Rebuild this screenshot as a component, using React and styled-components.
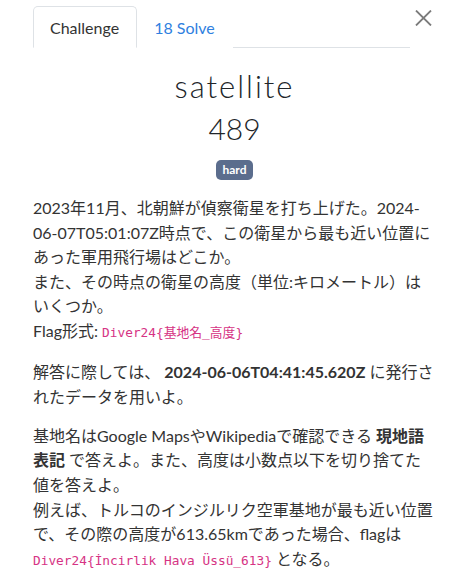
import styled, { createGlobalStyle } from "styled-components";

const GlobalStyle = createGlobalStyle`
  html, body {
    margin: 0;
    padding: 0;
    background: #fff;
  }
  body {
    font-family: Lato, "Noto Sans CJK JP", sans-serif;
    color: #212529;
  }
`;

const Modal = styled.div`
  width: 466px;
  box-sizing: border-box;
  padding: 6px 30px 0 33px;
`;

const Header = styled.div`
  display: flex;
  align-items: flex-start;
`;

const Tabs = styled.ul`
  display: flex;
  list-style: none;
  margin: 0;
  padding: 0;
  width: 377px;
  border-bottom: 1px solid #dee2e6;
`;

const Tab = styled.li`
  margin-bottom: -1px;
  padding: 0 17px 0 16px;
  height: 40px;
  display: flex;
  align-items: center;
  font-size: 16px;
  color: ${(p) => (p.$active ? "#333" : "#2f7fe0")};
  background: #fff;
  border: 1px solid ${(p) => (p.$active ? "#dee2e6" : "transparent")};
  border-bottom-color: ${(p) => (p.$active ? "#fff" : "transparent")};
  border-radius: 5px 5px 0 0;
  cursor: pointer;
`;

const Close = styled.button`
  margin: 4px 0 0 5px;
  padding: 0;
  border: 0;
  background: none;
  width: 17px;
  height: 16px;
  display: flex;
  cursor: pointer;
`;

const Title = styled.h2`
  margin: 18px 0 0;
  text-align: center;
  font-weight: 300;
  font-size: 31px;
  letter-spacing: 2px;
  line-height: 40px;
  color: #212529;
`;

const Value = styled.h3`
  margin: 2px 0 0;
  text-align: center;
  font-weight: 300;
  font-size: 30px;
  line-height: 40px;
  color: #212529;
`;

const BadgeRow = styled.div`
  display: flex;
  justify-content: center;
  margin-top: 12px;
`;

const Badge = styled.span`
  background: #5b6d8d;
  color: #fff;
  font-weight: 700;
  font-size: 12px;
  line-height: 20px;
  padding: 0 7px;
  border-radius: 5px;
`;

const Description = styled.div`
  margin-top: 16px;
  font-size: 16px;
  line-height: 24.6px;
  color: #333;
`;

const Para = styled.p`
  margin: 0 0 14.5px;
`;

const Code = styled.code`
  font-family: "DejaVu Sans Mono", "Noto Sans CJK JP", monospace;
  font-size: 12.8px;
  color: #d63384;
`;

const CloseIcon = () => (
  <svg width="17" height="16" viewBox="0 0 17 16">
    <path d="M1 0.5 L16 15.5 M16 0.5 L1 15.5" stroke="#7b7b7b" strokeWidth="1.8" />
  </svg>
);

const App = () => {
  return (
    <Modal>
      <GlobalStyle />
      <Header>
        <Tabs>
          <Tab $active>Challenge</Tab>
          <Tab>18 Solve</Tab>
        </Tabs>
        <Close aria-label="Close">
          <CloseIcon />
        </Close>
      </Header>
      <Title>satellite</Title>
      <Value>489</Value>
      <BadgeRow>
        <Badge>hard</Badge>
      </BadgeRow>
      <Description>
        <Para>
          2023年11月、北朝鮮が偵察衛星を打ち上げた。2024-06-07T05:01:07Z時点で、この衛星から最も近い位置にあった軍用飛行場はどこか。
          <br />
          また、その時点の衛星の高度（単位:キロメートル）はいくつか。
          <br />
          Flag形式: <Code>Diver24{"{"}基地名_高度{"}"}</Code>
        </Para>
        <Para>
          解答に際しては、 <b>2024-06-06T04:41:45.620Z</b> に発行されたデータを用いよ。
        </Para>
        <Para>
          基地名はGoogle MapsやWikipediaで確認できる <b>現地語表記</b> で答えよ。また、高度は小数点以下を切り捨てた値を答えよ。
          <br />
          例えば、トルコのインジルリク空軍基地が最も近い位置で、その際の高度が613.65kmであった場合、flagは
          <Code>Diver24{"{"}İncirlik Hava Üssü_613{"}"}</Code> となる。
        </Para>
      </Description>
    </Modal>
  );
};

export default App;
